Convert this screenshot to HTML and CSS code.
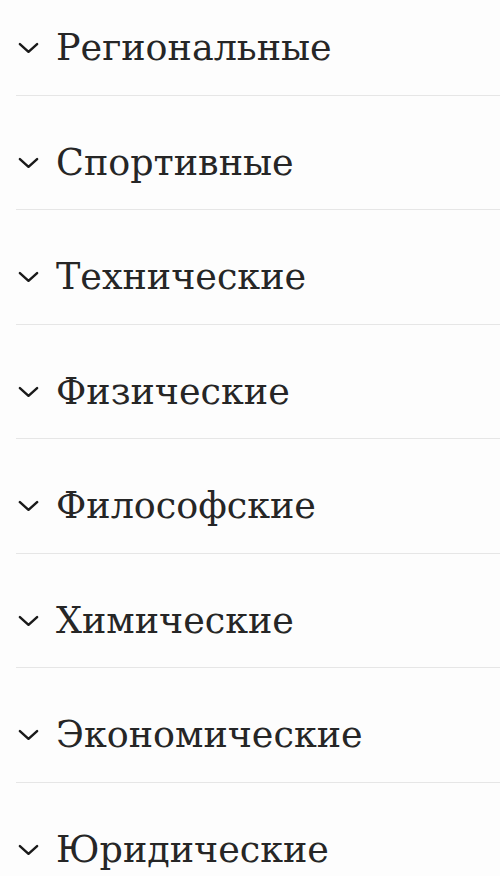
FILE: index.html
```html
<!DOCTYPE html>
<html lang="ru">
<head>
  <meta charset="UTF-8" />
  <meta name="viewport" content="width=device-width, initial-scale=1.0"/>
  <title>Категории</title>
  <link rel="stylesheet" href="styles.css">
</head>
<body>
  <ul class="category-list">
    <li class="category"><svg class="chevron" viewBox="0 0 22 12"><polyline points="2,2 11,10 20,2"/></svg><span>Региональные</span></li>
    <li class="category"><svg class="chevron" viewBox="0 0 22 12"><polyline points="2,2 11,10 20,2"/></svg><span>Спортивные</span></li>
    <li class="category"><svg class="chevron" viewBox="0 0 22 12"><polyline points="2,2 11,10 20,2"/></svg><span>Технические</span></li>
    <li class="category"><svg class="chevron" viewBox="0 0 22 12"><polyline points="2,2 11,10 20,2"/></svg><span>Физические</span></li>
    <li class="category"><svg class="chevron" viewBox="0 0 22 12"><polyline points="2,2 11,10 20,2"/></svg><span>Философские</span></li>
    <li class="category"><svg class="chevron" viewBox="0 0 22 12"><polyline points="2,2 11,10 20,2"/></svg><span>Химические</span></li>
    <li class="category"><svg class="chevron" viewBox="0 0 22 12"><polyline points="2,2 11,10 20,2"/></svg><span>Экономические</span></li>
    <li class="category"><svg class="chevron" viewBox="0 0 22 12"><polyline points="2,2 11,10 20,2"/></svg><span>Юридические</span></li>
  </ul>
</body>
</html>
```
FILE: styles.css
```css
body {
  margin: 0;
  padding: 0;
  background: #fdfdfd;
  font-family: 'DejaVu Serif', 'Liberation Serif', serif;
  color: #262626;
  overflow: hidden;
}

.category-list {
  list-style: none;
  margin: -19px 0 0 16px;
  padding: 0;
}

.category {
  display: flex;
  align-items: center;
  gap: 17px;
  height: 114.5px;
  box-sizing: border-box;
  padding: 21px 0 0 2px;
  border-bottom: 1px solid #e6e6e6;
  font-size: 36.5px;
  line-height: 42px;
}

.chevron {
  width: 21px;
  height: 12px;
  flex-shrink: 0;
}

.chevron polyline {
  fill: none;
  stroke: #1a1a1a;
  stroke-width: 2.6;
  stroke-linecap: round;
  stroke-linejoin: round;
}
```
